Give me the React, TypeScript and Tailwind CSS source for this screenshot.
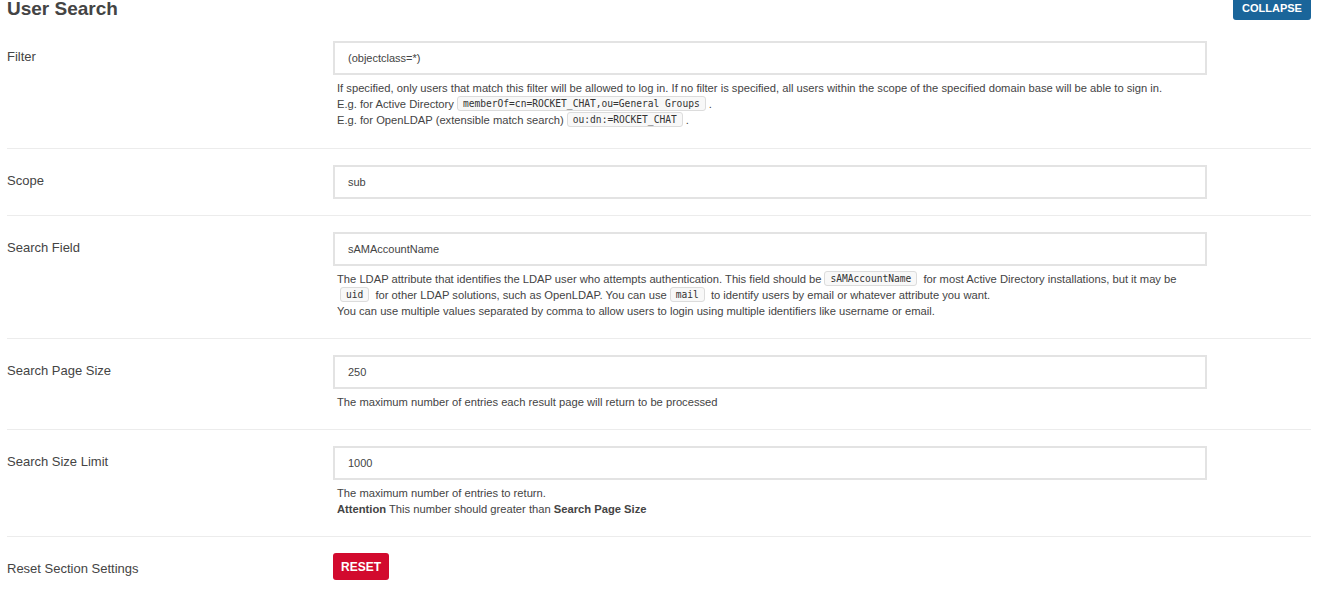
import React from "react";

const Code = ({ children }: { children: React.ReactNode }) => (
  <code className="mx-[3px] inline-block rounded-[3px] border border-[#dcdcdc] bg-[#f8f8f8] px-[5px] font-['DejaVu_Sans_Mono',monospace] text-[9.6px] leading-[13px] text-[#333] align-[1px]">
    {children}
  </code>
);

const Row = ({
  label,
  children,
  last,
}: {
  label: string;
  children: React.ReactNode;
  last?: boolean;
}) => (
  <div className={`flex py-4 ${last ? "" : "border-b border-[#ececec]"}`}>
    <div className="w-[326px] shrink-0 pt-[6px] text-[13px] leading-5 text-[#444]">{label}</div>
    <div className="w-[874px]">{children}</div>
  </div>
);

const Input = ({ value }: { value: string }) => (
  <div className="flex h-[34px] items-center border-2 border-[#e3e3e3] bg-white pl-[13px] text-[11px] text-[#444]">
    {value}
  </div>
);

const Help = ({ children, extra }: { children: React.ReactNode; extra?: boolean }) => (
  <div className={`mt-[5px] pl-[4px] text-[11.2px] leading-4 text-[#444] ${extra ? "mb-[4px]" : "mb-[3px]"}`}>
    {children}
  </div>
);

export default function App() {
  return (
    <div className="h-[598px] w-[1321px] overflow-hidden bg-white font-['Liberation_Sans',Arial,sans-serif] text-[#444]">
      <div className="pl-[7px] pr-[10px]">
        <div className="flex h-[25px] items-start justify-between">
          <h2 className="text-[19px] font-bold leading-[17px] text-[#444]">User Search</h2>
          <button className="-mt-[6px] h-[26px] w-[78px] rounded-[3px] bg-[#1a659a] pt-[3px] text-[11px] font-bold text-white">
            COLLAPSE
          </button>
        </div>

        <Row label="Filter">
          <Input value="(objectclass=*)" />
          <Help extra>
            <div>
              If specified, only users that match this filter will be allowed to log in. If no filter is specified, all users within the scope of the specified domain base will be able to sign in.
            </div>
            <div>
              E.g. for Active Directory<Code>memberOf=cn=ROCKET_CHAT,ou=General Groups</Code>.
            </div>
            <div>
              E.g. for OpenLDAP (extensible match search)<Code>ou:dn:=ROCKET_CHAT</Code>.
            </div>
          </Help>
        </Row>

        <Row label="Scope">
          <Input value="sub" />
        </Row>

        <Row label="Search Field">
          <Input value="sAMAccountName" />
          <Help>
            <div>
              The LDAP attribute that identifies the LDAP user who attempts authentication. This field should be<Code>sAMAccountName</Code> for most Active Directory installations, but it may be
            </div>
            <div>
              <Code>uid</Code> for other LDAP solutions, such as OpenLDAP. You can use<Code>mail</Code> to identify users by email or whatever attribute you want.
            </div>
            <div>You can use multiple values separated by comma to allow users to login using multiple identifiers like username or email.</div>
          </Help>
        </Row>

        <Row label="Search Page Size">
          <Input value="250" />
          <Help>
            <div>The maximum number of entries each result page will return to be processed</div>
          </Help>
        </Row>

        <Row label="Search Size Limit">
          <Input value="1000" />
          <Help>
            <div>The maximum number of entries to return.</div>
            <div>
              <b>Attention</b> This number should greater than <b>Search Page Size</b>
            </div>
          </Help>
        </Row>

        <Row label="Reset Section Settings" last>
          <button className="h-[27px] w-[56px] rounded-[3px] bg-[#d20a2e] text-[12px] font-bold text-white">RESET</button>
        </Row>
      </div>
    </div>
  );
}
